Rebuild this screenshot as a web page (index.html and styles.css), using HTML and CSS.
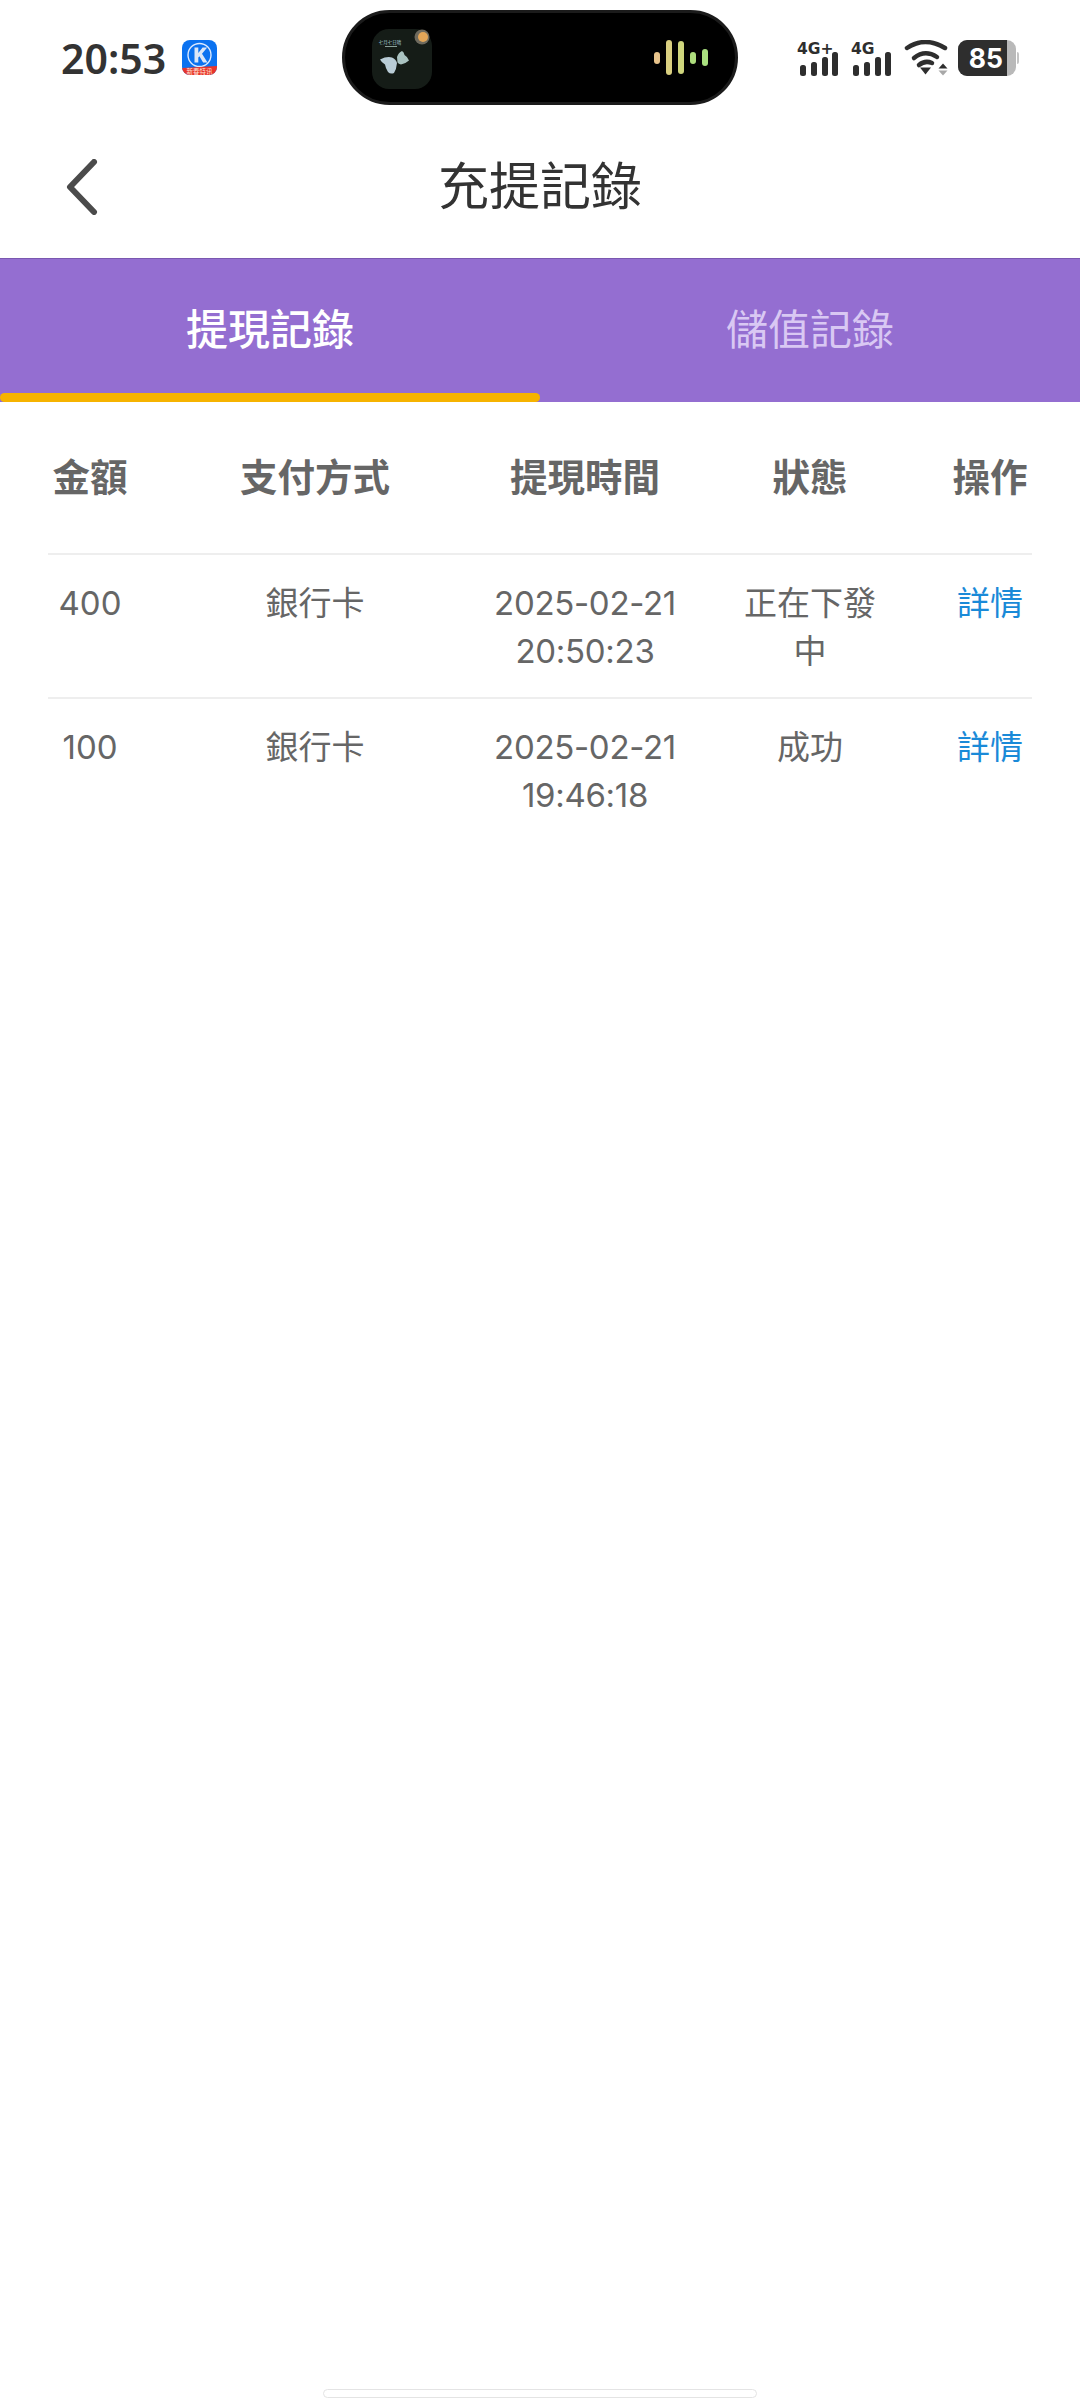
FILE: index.html
```html
<!DOCTYPE html>
<html lang="zh-Hant">
<head>
<meta charset="utf-8">
<title>充提記錄</title>
<link rel="stylesheet" href="styles.css">
</head>
<body>
<div class="page">
  <div class="statusbar">
    <div class="status-left">
      <span class="clock">20:53</span>
      <svg class="app-k" viewBox="0 0 35 35" width="35" height="35">
        <defs><clipPath id="kclip"><rect width="35" height="35" rx="8"/></clipPath></defs>
        <g clip-path="url(#kclip)">
          <rect width="35" height="35" fill="#0b72f0"/>
          <circle cx="17.500" cy="15" r="11.500" fill="none" stroke="#dbe9ff" stroke-width="1.400"/>
          <path d="M12.500 7.500v15h3.800v-4.900l1.100-1.300 3.700 6.200h4.400l-5.500-8.800 5.200-6.200h-4.600l-4.300 5.500v-5.500z" fill="#dbe6f7"/>
          <path d="M0 28q17.500-1 35-2v9H0z" fill="#e8352c"/>
          <text x="17.500" y="33.500" class="app-k-label">新春特讯</text>
        </g>
      </svg>
    </div>
    <div class="island">
      <svg class="island-art" viewBox="0 0 60 62" width="60" height="62">
        <rect x="0" y="2" width="60" height="60" rx="17" fill="#151c17"/>
        <text x="18" y="17" class="art-title">七月七日晴</text>
        <rect x="13" y="19" width="12" height="1" fill="#8aa09a"/>
        <path d="M8 32.500Q15 29 20 30.500 24 32 25 36 24.500 42 22 46 18.500 47.500 16 45 13.500 41 13 37.500 9.500 35.500 8 32.500z" fill="#b9ccd6"/>
        <path d="M25 30Q26.500 25.500 30 24 32 25 32.500 28 36 30 37 33.500 33 37 29 37.500 26.500 37 25.500 35.500z" fill="#a9c2c0"/>
        <circle cx="50" cy="10" r="7.500" fill="#6e6a5e"/>
        <circle cx="51" cy="10" r="5" fill="#e2a558"/>
      </svg>
      <div class="wave">
        <i class="bar b1"></i><i class="bar b2"></i><i class="bar b3"></i><i class="bar b4"></i><i class="bar b5"></i>
      </div>
    </div>
    <div class="status-right">
      <svg class="signal" viewBox="0 0 40 36" width="40" height="36">
        <text x="0" y="13.500" class="net">4G+</text>
        <rect x="3" y="25" width="6" height="11" rx="2.500"/>
        <rect x="14" y="22" width="6" height="14" rx="2.500"/>
        <rect x="25" y="17" width="6" height="19" rx="2.500"/>
        <rect x="35" y="12" width="6" height="24" rx="2.500"/>
      </svg>
      <svg class="signal signal-two" viewBox="0 0 40 36" width="40" height="36">
        <text x="1" y="13.500" class="net">4G</text>
        <rect x="3" y="25" width="6" height="11" rx="2.500"/>
        <rect x="14" y="22" width="6" height="14" rx="2.500"/>
        <rect x="25" y="17" width="6" height="19" rx="2.500"/>
        <rect x="35" y="12" width="6" height="24" rx="2.500"/>
      </svg>
      <svg class="wifi" viewBox="0 0 44 36" width="44" height="36">
        <g fill="none" stroke="#2e2e2e" stroke-width="4.500" stroke-linecap="round">
          <path d="M3 8Q21-4 41 8"/>
          <path d="M10 18Q21 9 33 17"/>
          <path d="M15 25Q21 20 28 23"/>
        </g>
        <path d="M16 27.500h11l-5.500 7z" fill="#2e2e2e"/>
        <path d="M39 23.500l4.500 5h-9z" fill="#2e2e2e"/>
        <path d="M34.500 30.500h9l-4.500 5z" fill="#a8a8a8"/>
      </svg>
      <div class="battery">
        <div class="battery-body"><span class="battery-fill">85</span></div>
        <span class="battery-nub"></span>
      </div>
    </div>
  </div>

  <header class="navbar">
    <svg class="back" viewBox="0 0 32 56" width="32" height="56">
      <path d="M28 3 4 28l24 25" fill="none" stroke="#4b4b4b" stroke-width="6" stroke-linecap="round" stroke-linejoin="round"/>
    </svg>
    <h1 class="title">充提記錄</h1>
  </header>

  <nav class="tabs">
    <div class="tab tab-active"><span class="tab-label">提現記錄</span><span class="tab-line"></span></div>
    <div class="tab"><span class="tab-label">儲值記錄</span><span class="tab-line tab-line-off"></span></div>
  </nav>

  <section class="table">
    <div class="row row-head">
      <div class="cell c1">金額</div>
      <div class="cell c2">支付方式</div>
      <div class="cell c3">提現時間</div>
      <div class="cell c4">狀態</div>
      <div class="cell c5">操作</div>
    </div>
    <div class="row">
      <div class="cell c1">400</div>
      <div class="cell c2">銀行卡</div>
      <div class="cell c3 date">2025-02-21 20:50:23</div>
      <div class="cell c4">正在下發中</div>
      <div class="cell c5"><a class="link">詳情</a></div>
    </div>
    <div class="row">
      <div class="cell c1">100</div>
      <div class="cell c2">銀行卡</div>
      <div class="cell c3 date">2025-02-21 19:46:18</div>
      <div class="cell c4">成功</div>
      <div class="cell c5"><a class="link">詳情</a></div>
    </div>
  </section>

  <div class="home-indicator"></div>
</div>
</body>
</html>
```
FILE: styles.css
```css
* { box-sizing: border-box; }
html, body { margin: 0; padding: 0; background: #fff; }
body { font-family: Inter, "Noto Sans CJK TC", sans-serif; }

.page {
  width: 1080px;
  height: 2400px;
  display: flex;
  flex-direction: column;
  overflow: hidden;
}

/* status bar */
.statusbar {
  height: 114px;
  flex: none;
  padding: 10px 61px 9px 61px;
  display: grid;
  grid-template-columns: 281px 396px 1fr;
  align-items: center;
}
.status-left { display: flex; align-items: center; gap: 16px; }
.clock { font-family: "Noto Sans", sans-serif; font-size: 41px; font-weight: 600; color: #333; }
.app-k { flex: none; }
.app-k-label { font-family: "Noto Sans CJK SC", sans-serif; font-size: 6.500px; fill: #ffe5d8; text-anchor: middle; }

.island {
  width: 396px;
  height: 95px;
  background: #000;
  border: 3px solid #1b1b1b;
  border-radius: 48px;
  padding: 0 27px;
  display: flex;
  align-items: center;
  justify-content: space-between;
}
.island-art { flex: none; }
.art-title { font-family: "Noto Sans CJK SC", sans-serif; font-size: 4.500px; fill: #a9cfd8; text-anchor: middle; }
.wave { display: flex; align-items: center; gap: 6px; }
.bar { display: block; width: 6px; border-radius: 3px; }
.b1 { height: 12px; background: #e8c48c; }
.b2 { height: 35px; background: #d9cf80; }
.b3 { height: 33px; background: #cfd67d; }
.b4 { height: 12px; background: #aedd7d; }
.b5 { height: 17px; background: #a9e07f; }

.status-right { display: flex; align-items: center; justify-content: flex-end; }
.signal { fill: #2e2e2e; flex: none; overflow: visible; }
.signal-two { margin-left: 13px; }
.net { font-family: "DejaVu Sans", sans-serif; font-size: 15.500px; font-weight: 700; fill: #2e2e2e; }
.wifi { flex: none; margin-left: 14px; }
.battery { display: flex; align-items: center; margin-left: 10px; }
.battery-body {
  width: 58px;
  height: 36px;
  border-radius: 9px;
  background: #b9b9b9;
  overflow: hidden;
}
.battery-fill {
  display: block;
  width: 49px;
  height: 36px;
  background: #2e2e2e;
  color: #fff;
  font-family: Inter, sans-serif;
  font-size: 26.500px;
  font-weight: 700;
  line-height: 36px;
  text-align: right;
  padding-right: 4px;
}
.battery-nub { width: 2px; height: 12px; background: #c4c4c4; border-radius: 0 2px 2px 0; margin-left: 1px; }

/* nav */
.navbar {
  height: 144px;
  flex: none;
  padding-left: 66px;
  display: grid;
  grid-template-columns: 32px 1fr;
  align-items: center;
}
.back { margin-top: 1px; }
.title {
  margin: 2px 98px 0 0;
  text-align: center;
  font-size: 51px;
  font-weight: 400;
  color: #333;
  line-height: 1.2;
}

/* tabs */
.tabs {
  height: 144px;
  flex: none;
  display: flex;
  background: #946ed1;
  border-top: 1px solid #7a57b0;
}
.tab { flex: 1; display: flex; flex-direction: column; }
.tab-label {
  flex: 1;
  display: flex;
  align-items: center;
  justify-content: center;
  font-size: 42px;
  font-weight: 400;
  color: #d9c8f3;
}
.tab-active .tab-label { color: #fff; font-weight: 500; }
.tab-line { height: 9px; border-radius: 5px; background: #f6b300; }
.tab-line-off { background: transparent; }

/* table */
.table { padding: 0 48px; flex: none; }
.row {
  display: grid;
  grid-template-columns: 84px 357px 192px 267px 84px;
  padding: 24px 0 22px;
  border-bottom: 2px solid #eeeeee;
  font-size: 33px;
  line-height: 48px;
  color: #666;
}
.row:last-child { border-bottom: 0; }
.row-head {
  height: 153px;
  padding: 52px 0 0;
  font-size: 37.500px;
  font-weight: 700;
}
.cell { text-align: center; }
.c2 { padding-left: 9px; }
.c4 { padding: 0 69px 0 60px; }
.date { letter-spacing: -0.300px; }
.link { color: #1a8ad8; }

.home-indicator {
  margin: auto auto 2px;
  width: 434px;
  height: 9px;
  border: 1.500px solid #e4e4e4;
  border-radius: 5px;
  background: #fff;
}
```
